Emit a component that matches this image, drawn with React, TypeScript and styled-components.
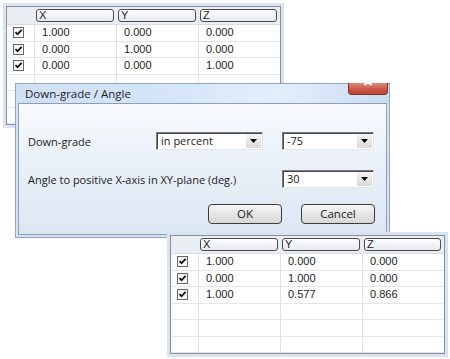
import React from 'react'
import styled, { createGlobalStyle } from 'styled-components'

const GlobalStyle = createGlobalStyle`
  html, body {
    margin: 0;
    padding: 0;
    background: #ffffff;
  }
  * {
    box-sizing: border-box;
  }
`

const Canvas = styled.div`
  position: relative;
  width: 450px;
  height: 359px;
  overflow: hidden;
  background: #ffffff;
`

/* ---------- point grids ---------- */

const GridWindow = styled.div<{ $left: number; $top: number; $z: number }>`
  position: absolute;
  left: ${(p) => p.$left}px;
  top: ${(p) => p.$top}px;
  z-index: ${(p) => p.$z};
  border: 3px solid #d8e4f3;
`

const GridBody = styled.div`
  border: 1px solid #8e8e8e;
  background: #ffffff;
  font-family: 'Liberation Sans', Arial, sans-serif;
  font-size: 11px;
  color: #1c1c1c;
`

const columns = '28px 82px 82px 81px'

const HeaderRow = styled.div`
  display: grid;
  grid-template-columns: ${columns};
  height: 18px;
  background: #e9eef5;
  border-bottom: 1px solid #dcdcdc;
`

const HeaderBox = styled.div`
  margin: 2px 3px 2px 1px;
  border: 1px solid #4a4a4a;
  border-radius: 3px;
  background: linear-gradient(#ffffff, #e6e9ee);
  padding-left: 2px;
  line-height: 11px;
  font-size: 11px;
`

const Row = styled.div`
  display: grid;
  grid-template-columns: ${columns};
  height: 16.5px;
`

const Cell = styled.div`
  border-right: 1px solid #e2e2e2;
  border-bottom: 1px solid #e6e6e6;
  padding-left: 7px;
  line-height: 15px;
  white-space: nowrap;
  overflow: hidden;

  &:last-child {
    border-right: none;
  }
`

const CheckCell = styled(Cell)`
  display: flex;
  align-items: center;
  padding-left: 6px;
`

const CheckBox = styled.div`
  width: 11px;
  height: 11px;
  border: 1px solid #666666;
  background: linear-gradient(#f2f2f2, #ffffff);
  display: flex;
  align-items: center;
  justify-content: center;
`

const Check = () => (
  <CheckBox>
    <svg width="9" height="9" viewBox="0 0 9 9">
      <path d="M1.5 4.2 L3.5 6.3 L7.6 1.8" fill="none" stroke="#111" strokeWidth="1.8" />
    </svg>
  </CheckBox>
)

type Point = [string, string, string]

const PointGrid = ({ points, rows }: { points: Point[]; rows: number }) => (
  <GridBody>
    <HeaderRow>
      <div />
      <HeaderBox>X</HeaderBox>
      <HeaderBox>Y</HeaderBox>
      <HeaderBox>Z</HeaderBox>
    </HeaderRow>
    {Array.from({ length: rows }).map((_, i) => {
      const p = points[i]
      return (
        <Row key={i}>
          <CheckCell>{p && <Check />}</CheckCell>
          <Cell>{p?.[0]}</Cell>
          <Cell>{p?.[1]}</Cell>
          <Cell>{p?.[2]}</Cell>
        </Row>
      )
    })}
  </GridBody>
)

/* ---------- dialog ---------- */

const Dialog = styled.div`
  position: absolute;
  left: 15px;
  top: 83px;
  width: 375px;
  height: 155px;
  z-index: 2;
  display: flex;
  flex-direction: column;
  border: 1px solid #8fa7c4;
  background: #d3e2f4;
  font-family: 'Open Sans', 'Noto Sans', sans-serif;
  font-size: 11px;
  color: #1b1b1b;
`

const TitleBar = styled.div`
  height: 19px;
  display: flex;
  justify-content: space-between;
  align-items: flex-start;
  background: linear-gradient(90deg, #cfe0f5 0%, #d6e6f8 45%, #e3eefb 70%, #cadcf2 100%);
`

const Title = styled.div`
  padding-left: 9px;
  line-height: 20px;
  font-size: 11.5px;
  color: #1e1e1e;
`

const CloseButton = styled.div`
  width: 40px;
  height: 12px;
  margin-right: 1px;
  margin-top: -1px;
  border: 1px solid #7c3226;
  border-top: none;
  border-radius: 0 0 4px 4px;
  background: linear-gradient(#de8d7c, #cc5746 55%, #bf4636);
  display: flex;
  justify-content: center;
`

const ClientArea = styled.div`
  flex: 1;
  margin: 0 2px 2px 2px;
  border: 1px solid #909eb0;
  background: linear-gradient(#f9fbfd 0%, #e9f0f8 45%, #dde7f3 100%);
  padding: 28px 11px 0 9px;
`

const FormGrid = styled.div`
  display: grid;
  grid-template-columns: 109px 107px 92px;
  column-gap: 19px;
  row-gap: 20px;
  align-items: center;
`

const Label = styled.div<{ $span?: boolean }>`
  grid-column: ${(p) => (p.$span ? '1 / 3' : 'auto')};
  white-space: nowrap;
`

const Combo = styled.div`
  height: 18px;
  display: flex;
  align-items: stretch;
  border: 1px solid;
  border-color: #7b7b7b #e4e4e4 #e4e4e4 #7b7b7b;
  box-shadow: inset 1px 1px 0 #4a4a4a;
  background: #ffffff;
`

const ComboText = styled.div`
  flex: 1;
  padding-left: 4px;
  line-height: 15px;
`

const ComboArrow = styled.div`
  width: 15px;
  margin: 1px 1px 1px 0;
  background: linear-gradient(#f5f5f5, #d9d9d9);
  display: flex;
  align-items: center;
  justify-content: center;
`

const Select = ({ value }: { value: string }) => (
  <Combo>
    <ComboText>{value}</ComboText>
    <ComboArrow>
      <svg width="7" height="4" viewBox="0 0 7 4">
        <path d="M0 0 H7 L3.5 4 Z" fill="#000" />
      </svg>
    </ComboArrow>
  </Combo>
)

const ButtonRow = styled.div`
  margin-top: 16px;
  display: flex;
  justify-content: flex-end;
  gap: 19px;
`

const Button = styled.div`
  width: 74px;
  height: 20px;
  border: 1px solid #3c3c3c;
  border-radius: 4px;
  background: linear-gradient(#f7f7f7, #e2e2e2 60%, #d8d8d8);
  text-align: center;
  line-height: 17px;
  font-size: 11.5px;
`

const topPoints: Point[] = [
  ['1.000', '0.000', '0.000'],
  ['0.000', '1.000', '0.000'],
  ['0.000', '0.000', '1.000'],
]

const bottomPoints: Point[] = [
  ['1.000', '0.000', '0.000'],
  ['0.000', '1.000', '0.000'],
  ['1.000', '0.577', '0.866'],
]

export default function App() {
  return (
    <>
      <GlobalStyle />
      <Canvas>
        <GridWindow $left={3} $top={3} $z={1}>
          <PointGrid points={topPoints} rows={6} />
        </GridWindow>

        <Dialog>
          <TitleBar>
            <Title>Down-grade / Angle</Title>
            <CloseButton>
              <svg width="12" height="8" viewBox="0 0 12 8">
                <path d="M2.5 -5 L9.5 2 M9.5 -5 L2.5 2" stroke="#ffffff" strokeWidth="2.2" />
              </svg>
            </CloseButton>
          </TitleBar>
          <ClientArea>
            <FormGrid>
              <Label>Down-grade</Label>
              <Select value="in percent" />
              <Select value="-75" />
              <Label $span>Angle to positive X-axis in XY-plane (deg.)</Label>
              <Select value="30" />
            </FormGrid>
            <ButtonRow>
              <Button>OK</Button>
              <Button>Cancel</Button>
            </ButtonRow>
          </ClientArea>
        </Dialog>

        <GridWindow $left={167} $top={232} $z={3}>
          <PointGrid points={bottomPoints} rows={6} />
        </GridWindow>
      </Canvas>
    </>
  )
}
